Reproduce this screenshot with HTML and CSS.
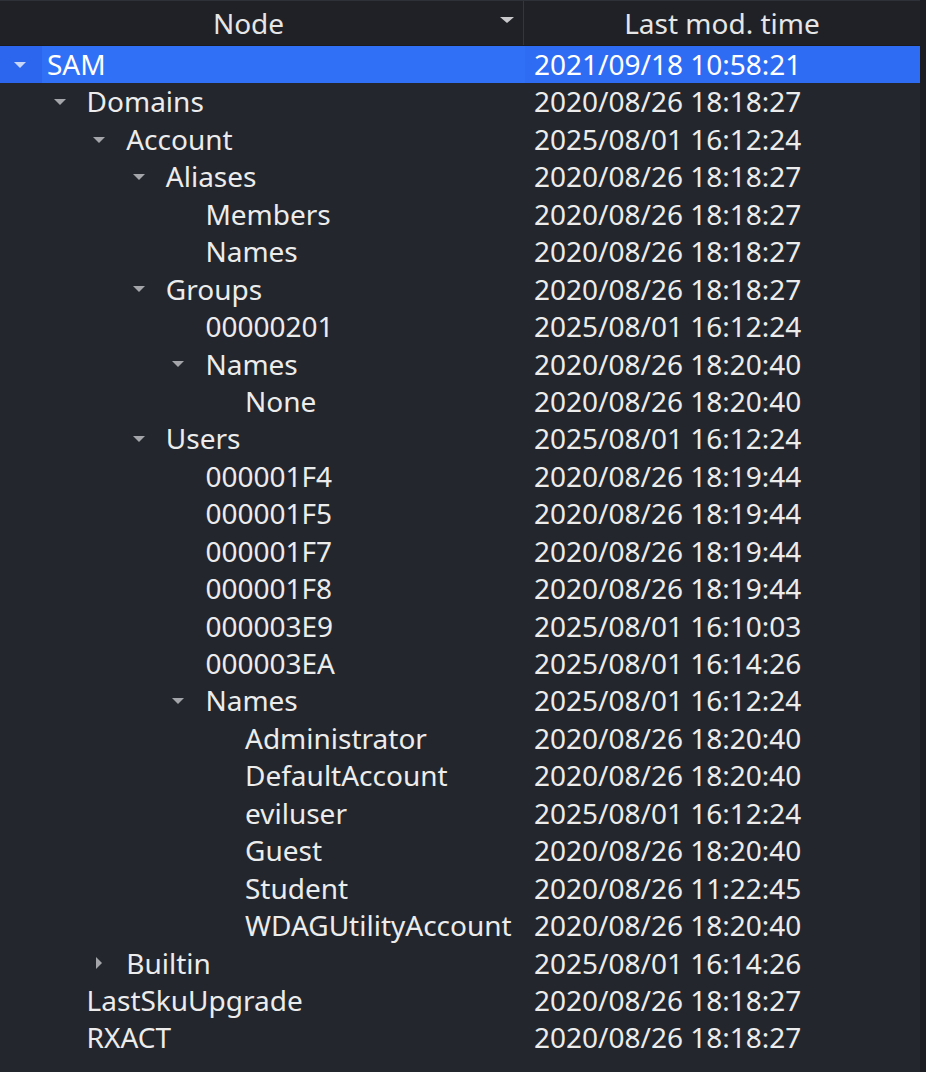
FILE: index.html
```html
<!DOCTYPE html>
<html>
<head>
<meta charset="utf-8">
<link rel="stylesheet" href="styles.css">
</head>
<body>
<div class="view">
  <div class="header">
    <div class="hcell hnode">Node<span class="sort"></span></div>
    <div class="hcell htime">Last mod. time</div>
  </div>
  <div class="rows">
    <div class="row selected"><div class="node d0"><span class="arrow down"></span><span class="label">SAM</span></div><div class="time">2021/09/18 10:58:21</div></div>
    <div class="row"><div class="node d1"><span class="arrow down"></span><span class="label">Domains</span></div><div class="time">2020/08/26 18:18:27</div></div>
    <div class="row"><div class="node d2"><span class="arrow down"></span><span class="label">Account</span></div><div class="time">2025/08/01 16:12:24</div></div>
    <div class="row"><div class="node d3"><span class="arrow down"></span><span class="label">Aliases</span></div><div class="time">2020/08/26 18:18:27</div></div>
    <div class="row"><div class="node d4"><span class="arrow"></span><span class="label">Members</span></div><div class="time">2020/08/26 18:18:27</div></div>
    <div class="row"><div class="node d4"><span class="arrow"></span><span class="label">Names</span></div><div class="time">2020/08/26 18:18:27</div></div>
    <div class="row"><div class="node d3"><span class="arrow down"></span><span class="label">Groups</span></div><div class="time">2020/08/26 18:18:27</div></div>
    <div class="row"><div class="node d4"><span class="arrow"></span><span class="label">00000201</span></div><div class="time">2025/08/01 16:12:24</div></div>
    <div class="row"><div class="node d4"><span class="arrow down"></span><span class="label">Names</span></div><div class="time">2020/08/26 18:20:40</div></div>
    <div class="row"><div class="node d5"><span class="arrow"></span><span class="label">None</span></div><div class="time">2020/08/26 18:20:40</div></div>
    <div class="row"><div class="node d3"><span class="arrow down"></span><span class="label">Users</span></div><div class="time">2025/08/01 16:12:24</div></div>
    <div class="row"><div class="node d4"><span class="arrow"></span><span class="label">000001F4</span></div><div class="time">2020/08/26 18:19:44</div></div>
    <div class="row"><div class="node d4"><span class="arrow"></span><span class="label">000001F5</span></div><div class="time">2020/08/26 18:19:44</div></div>
    <div class="row"><div class="node d4"><span class="arrow"></span><span class="label">000001F7</span></div><div class="time">2020/08/26 18:19:44</div></div>
    <div class="row"><div class="node d4"><span class="arrow"></span><span class="label">000001F8</span></div><div class="time">2020/08/26 18:19:44</div></div>
    <div class="row"><div class="node d4"><span class="arrow"></span><span class="label">000003E9</span></div><div class="time">2025/08/01 16:10:03</div></div>
    <div class="row"><div class="node d4"><span class="arrow"></span><span class="label">000003EA</span></div><div class="time">2025/08/01 16:14:26</div></div>
    <div class="row"><div class="node d4"><span class="arrow down"></span><span class="label">Names</span></div><div class="time">2025/08/01 16:12:24</div></div>
    <div class="row"><div class="node d5"><span class="arrow"></span><span class="label">Administrator</span></div><div class="time">2020/08/26 18:20:40</div></div>
    <div class="row"><div class="node d5"><span class="arrow"></span><span class="label">DefaultAccount</span></div><div class="time">2020/08/26 18:20:40</div></div>
    <div class="row"><div class="node d5"><span class="arrow"></span><span class="label">eviluser</span></div><div class="time">2025/08/01 16:12:24</div></div>
    <div class="row"><div class="node d5"><span class="arrow"></span><span class="label">Guest</span></div><div class="time">2020/08/26 18:20:40</div></div>
    <div class="row"><div class="node d5"><span class="arrow"></span><span class="label">Student</span></div><div class="time">2020/08/26 11:22:45</div></div>
    <div class="row"><div class="node d5"><span class="arrow"></span><span class="label">WDAGUtilityAccount</span></div><div class="time">2020/08/26 18:20:40</div></div>
    <div class="row"><div class="node d2"><span class="arrow right"></span><span class="label">Builtin</span></div><div class="time">2025/08/01 16:14:26</div></div>
    <div class="row"><div class="node d1"><span class="arrow"></span><span class="label">LastSkuUpgrade</span></div><div class="time">2020/08/26 18:18:27</div></div>
    <div class="row"><div class="node d1"><span class="arrow"></span><span class="label">RXACT</span></div><div class="time">2020/08/26 18:18:27</div></div>
  </div>
</div>
</body>
</html>
```

FILE: styles.css
```css
html, body {
  margin: 0;
  padding: 0;
  background: #23262d;
}
body {
  width: 926px;
  height: 1072px;
  overflow: hidden;
  font-family: "Noto Sans", "Open Sans", sans-serif;
  font-size: 28px;
  color: #ececec;
}
.view {
  width: 920px;
  height: 1072px;
  background: #23262d;
  border-right: 6px solid #1b1d22;
}
.header {
  display: flex;
  height: 44px;
  background: #1f2127;
  border-top: 1px solid #2e3138;
  border-bottom: 1px solid #191b20;
}
.hcell {
  display: flex;
  align-items: center;
  justify-content: center;
  line-height: 44px;
  color: #e6e6e6;
  position: relative;
}
.hnode {
  width: 524px;
  box-sizing: border-box;
  padding-right: 26px;
  border-right: 1px solid #33363d;
}
.htime {
  flex: 1;
}
.sort {
  position: absolute;
  right: 9px;
  top: 16px;
  width: 0;
  height: 0;
  border-left: 7px solid transparent;
  border-right: 7px solid transparent;
  border-top: 6px solid #c9c9cb;
}
.rows {
  display: flex;
  flex-direction: column;
}
.row {
  display: flex;
  height: 37.44px;
  line-height: 37.44px;
  white-space: nowrap;
}
.row.selected {
  background: #2f6cf4;
  color: #ffffff;
}
.row.selected .node {
  background: linear-gradient(to right, #2c66ee 0, #2c66ee 42px, #3070f6 42px);
}
.node {
  width: 525px;
  display: flex;
  align-items: center;
  box-sizing: border-box;
}
.d0 { padding-left: 14px; }
.d1 { padding-left: 53.6px; }
.d2 { padding-left: 93.2px; }
.d3 { padding-left: 132.8px; }
.d4 { padding-left: 172.4px; }
.d5 { padding-left: 212px; }
.arrow {
  width: 12px;
  height: 12px;
  margin-right: 21px;
  flex: none;
  position: relative;
}
.arrow.down::before {
  content: "";
  position: absolute;
  left: 0;
  top: 3px;
  border-left: 6px solid transparent;
  border-right: 6px solid transparent;
  border-top: 6px solid #a3a5aa;
}
.row.selected .arrow.down::before {
  border-top-color: #c8d6fa;
}
.arrow.right::before {
  content: "";
  position: absolute;
  left: 3px;
  top: 0;
  border-top: 6px solid transparent;
  border-bottom: 6px solid transparent;
  border-left: 6px solid #a3a5aa;
}
.label {
  display: block;
}
.time {
  flex: 1;
  padding-left: 9px;
}
```
